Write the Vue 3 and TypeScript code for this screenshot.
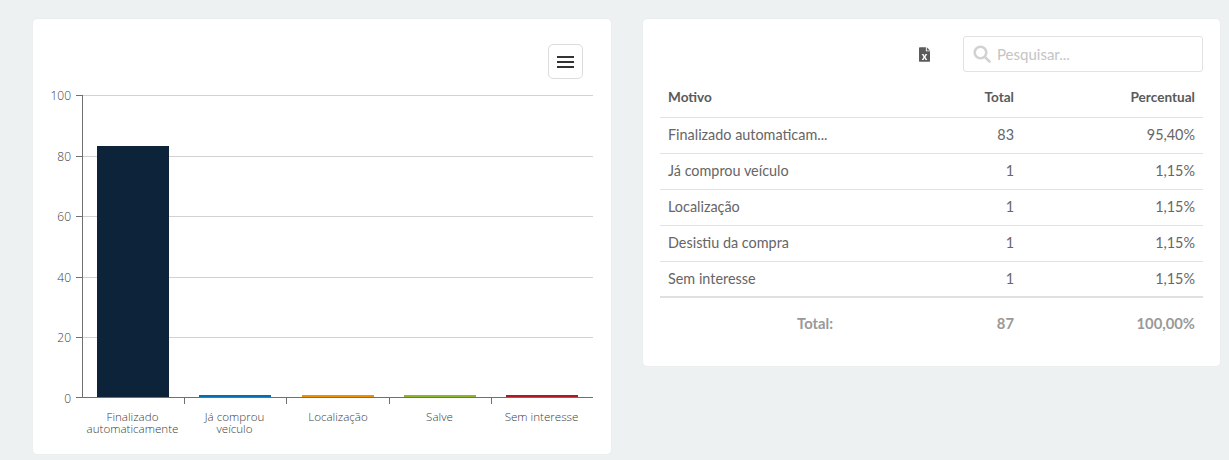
<script setup lang="ts">
interface Row { motivo: string; total: number; pct: string }
const rows: Row[] = [
  { motivo: 'Finalizado automaticam...', total: 83, pct: '95,40%' },
  { motivo: 'Já comprou veículo', total: 1, pct: '1,15%' },
  { motivo: 'Localização', total: 1, pct: '1,15%' },
  { motivo: 'Desistiu da compra', total: 1, pct: '1,15%' },
  { motivo: 'Sem interesse', total: 1, pct: '1,15%' },
]
const grid = [
  { y: 95.5, label: '100' },
  { y: 156.5, label: '80' },
  { y: 216.5, label: '60' },
  { y: 277.5, label: '40' },
  { y: 337.5, label: '20' },
  { y: 397.5, label: '0' },
]
const bars = [
  { x: 97, y: 146, h: 251, c: '#0d233a' },
  { x: 199, y: 395, h: 2, c: '#0070b0' },
  { x: 302, y: 395, h: 2, c: '#ee9100' },
  { x: 404, y: 395, h: 2, c: '#8ab82a' },
  { x: 506, y: 395, h: 2, c: '#ab1a25' },
]
const ticks = [184.5, 286.5, 389.5, 491.5]
const labels = [
  { x: 132.5, lines: ['Finalizado', 'automaticamente'] },
  { x: 234.5, lines: ['Já comprou', 'veículo'] },
  { x: 338, lines: ['Localização'] },
  { x: 439.5, lines: ['Salve'] },
  { x: 541.5, lines: ['Sem interesse'] },
]
</script>

<template>
  <div class="page">
    <section class="card chart-card">
      <svg class="chart" width="578" height="435" viewBox="33 19 578 435">
        <line v-for="g in grid" :key="g.label" x1="82" x2="593" :y1="g.y" :y2="g.y" class="grid" />
        <line v-for="g in grid" :key="'t' + g.label" x1="76" x2="82" :y1="g.y" :y2="g.y" class="axis" />
        <text v-for="g in grid" :key="'l' + g.label" x="71" :y="g.y + 4 + (g.label === '0' ? 1 : 0)" text-anchor="end" class="tick">{{ g.label }}</text>
        <rect v-for="b in bars" :key="b.x" :x="b.x" :y="b.y" width="72" :height="b.h" :fill="b.c" />
        <line x1="82.5" x2="82.5" y1="95" y2="398" class="axis" />
        <line x1="76" x2="593" y1="397.5" y2="397.5" class="axis" />
        <line v-for="t in ticks" :key="t" :x1="t" :x2="t" y1="398" y2="404" class="axis" />
        <text v-for="l in labels" :key="l.x" text-anchor="middle" class="cat">
          <tspan v-for="(s, i) in l.lines" :key="s" :x="l.x" :y="421 + i * 12">{{ s }}</tspan>
        </text>
      </svg>
      <button class="menu" type="button" aria-label="Menu">
        <span></span><span></span><span></span>
      </button>
    </section>

    <section class="card table-card">
      <div class="toolbar">
        <svg class="xls" width="11" height="15" viewBox="0 0 12 16">
          <path d="M1 0h6.500v4.500h4.500V15a1 1 0 0 1-1 1H1a1 1 0 0 1-1-1V1a1 1 0 0 1 1-1z" fill="#5c5c5c" />
          <path d="M8.500 0 12 3.500H8.500z" fill="#5c5c5c" />
          <path d="M3 7.500h1.900L6 9.500l1.100-2H9L7 10.700 9 14H7.100L6 11.900 4.900 14H3l2-3.300z" fill="#fff" />
        </svg>
        <label class="search">
          <svg width="18" height="18" viewBox="0 0 18 18" fill="none" stroke="#d2d2d2" stroke-width="2.600">
            <circle cx="7.500" cy="7.500" r="5.800" />
            <path d="M11.800 11.800 16.500 16.500" stroke-linecap="round" />
          </svg>
          <input type="text" placeholder="Pesquisar..." />
        </label>
      </div>
      <table>
        <thead>
          <tr><th class="l">Motivo</th><th>Total</th><th>Percentual</th></tr>
        </thead>
        <tbody>
          <tr v-for="r in rows" :key="r.motivo">
            <td class="l">{{ r.motivo }}</td><td>{{ r.total }}</td><td>{{ r.pct }}</td>
          </tr>
        </tbody>
        <tfoot>
          <tr><td>Total:</td><td>87</td><td>100,00%</td></tr>
        </tfoot>
      </table>
    </section>
  </div>
</template>

<style>
html, body { margin: 0; background: #eef1f2; }
</style>

<style scoped>
.page {
  display: flex;
  align-items: flex-start;
  gap: 32px;
  padding: 19px 9px 0 33px;
  height: 460px;
  box-sizing: border-box;
  overflow: hidden;
  font-family: Lato, "Noto Sans", sans-serif;
}
.card {
  background: #fff;
  border-radius: 4px;
  box-shadow: 0 0 1px rgba(0, 0, 0, 0.12);
}
.chart-card {
  position: relative;
  width: 578px;
  height: 435px;
  flex: none;
}
.chart { display: block; }
.grid { stroke: #d2d2d2; stroke-width: 1; }
.axis { stroke: #707070; stroke-width: 1; }
.tick { font: 300 12px "Open Sans", sans-serif; fill: #3c3c3c; }
.cat { font: 300 11.600px "Open Sans", sans-serif; fill: #3c3c3c; }
.menu {
  position: absolute;
  left: 515px;
  top: 25px;
  width: 35px;
  height: 35px;
  padding: 0;
  background: #fff;
  border: 1px solid #dcdcdc;
  border-radius: 5px;
  display: flex;
  flex-direction: column;
  align-items: center;
  justify-content: center;
  gap: 3px;
}
.menu span { display: block; width: 17px; height: 2px; background: #333; }
.table-card {
  width: 577px;
  height: 347px;
  flex: none;
  padding: 17px 17px 0;
  box-sizing: border-box;
}
.toolbar {
  display: flex;
  justify-content: flex-end;
  align-items: center;
  gap: 33px;
  height: 36px;
}
.xls { display: block; }
.search {
  width: 240px;
  height: 36px;
  box-sizing: border-box;
  border: 1px solid #e2e2e2;
  border-radius: 3px;
  display: flex;
  align-items: center;
  gap: 6px;
  padding-left: 9px;
}
.search input {
  border: 0;
  outline: 0;
  padding: 0;
  flex: 1;
  min-width: 0;
  font: 15px Lato, sans-serif;
  color: #666;
  background: transparent;
}
.search input::placeholder { color: #c4c4c4; opacity: 1; }
table {
  width: 100%;
  border-collapse: collapse;
  table-layout: fixed;
  margin-top: 9px;
  font-size: 14.400px;
  color: #666;
}
th, td { padding: 0 8px; text-align: right; height: 36px; box-sizing: border-box; font-weight: 400; }
.l { text-align: left; }
th { height: 36px; padding-bottom: 4px; font-weight: 700; font-size: 13.600px; color: #5a5a5a; border-bottom: 1px solid #e2e2e2; }
tbody td { border-bottom: 1px solid #e2e2e2; padding-bottom: 1px; }
tbody tr:last-child td { border-bottom: 2px solid #e0e0e0; }
tfoot td { font-weight: 700; font-size: 14.800px; color: #999; height: 49px; padding-top: 2px; }
</style>
